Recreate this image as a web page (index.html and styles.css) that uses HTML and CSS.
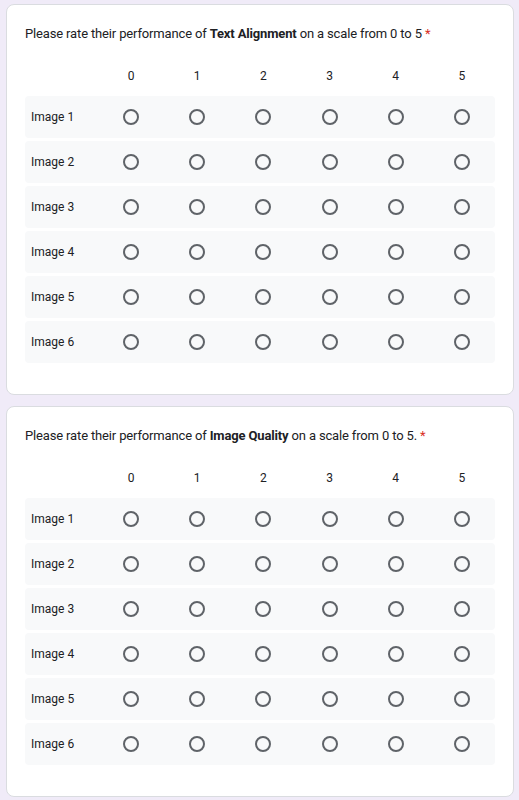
FILE: index.html
```html
<!DOCTYPE html>
<html>
<head>
<meta charset="utf-8">
<link rel="stylesheet" href="styles.css">
</head>
<body>
<div class="page">
  <section class="card">
    <div class="title">Please rate their performance of <b>Text Alignment</b> on a scale from 0 to 5 <span class="req">*</span></div>
    <div class="grid">
      <div class="head"><span class="lbl"></span><span>0</span><span>1</span><span>2</span><span>3</span><span>4</span><span>5</span></div>
      <div class="row"><span class="lbl">Image 1</span><i></i><i></i><i></i><i></i><i></i><i></i></div>
      <div class="row"><span class="lbl">Image 2</span><i></i><i></i><i></i><i></i><i></i><i></i></div>
      <div class="row"><span class="lbl">Image 3</span><i></i><i></i><i></i><i></i><i></i><i></i></div>
      <div class="row"><span class="lbl">Image 4</span><i></i><i></i><i></i><i></i><i></i><i></i></div>
      <div class="row"><span class="lbl">Image 5</span><i></i><i></i><i></i><i></i><i></i><i></i></div>
      <div class="row"><span class="lbl">Image 6</span><i></i><i></i><i></i><i></i><i></i><i></i></div>
    </div>
  </section>
  <section class="card">
    <div class="title">Please rate their performance of <b>Image Quality</b> on a scale from 0 to 5. <span class="req">*</span></div>
    <div class="grid">
      <div class="head"><span class="lbl"></span><span>0</span><span>1</span><span>2</span><span>3</span><span>4</span><span>5</span></div>
      <div class="row"><span class="lbl">Image 1</span><i></i><i></i><i></i><i></i><i></i><i></i></div>
      <div class="row"><span class="lbl">Image 2</span><i></i><i></i><i></i><i></i><i></i><i></i></div>
      <div class="row"><span class="lbl">Image 3</span><i></i><i></i><i></i><i></i><i></i><i></i></div>
      <div class="row"><span class="lbl">Image 4</span><i></i><i></i><i></i><i></i><i></i><i></i></div>
      <div class="row"><span class="lbl">Image 5</span><i></i><i></i><i></i><i></i><i></i><i></i></div>
      <div class="row"><span class="lbl">Image 6</span><i></i><i></i><i></i><i></i><i></i><i></i></div>
    </div>
  </section>
</div>
</body>
</html>
```
FILE: styles.css
```css
html, body {
  margin: 0;
  padding: 0;
  background: #f0ebf8;
}
body {
  font-family: Roboto, "Liberation Sans", sans-serif;
  color: #202124;
}
.page {
  padding: 4px 5px 0 6px;
  display: flex;
  flex-direction: column;
  gap: 11px;
}
.card {
  background: #fff;
  border: 1px solid #dadce0;
  border-radius: 8px;
  padding: 20px 18px 31px 18px;
}
.title {
  font-size: 13px;
  line-height: 18px;
  letter-spacing: -0.15px;
}
.title b {
  font-weight: 700;
}
.req {
  color: #d93025;
}
.grid {
  margin-top: 24px;
  display: flex;
  flex-direction: column;
  gap: 3px;
}
.head, .row {
  display: grid;
  grid-template-columns: 73px repeat(6, 1fr);
  align-items: center;
  justify-items: center;
}
.head {
  font-size: 12px;
  height: 18px;
  margin-bottom: 8px;
}
.row {
  height: 42px;
  background: #f8f9fa;
  border-radius: 4px;
  font-size: 12px;
}
.lbl {
  justify-self: start;
  padding-left: 6px;
}
.row i {
  display: block;
  width: 16px;
  height: 16px;
  box-sizing: border-box;
  border: 2px solid #5f6368;
  border-radius: 50%;
}
```
